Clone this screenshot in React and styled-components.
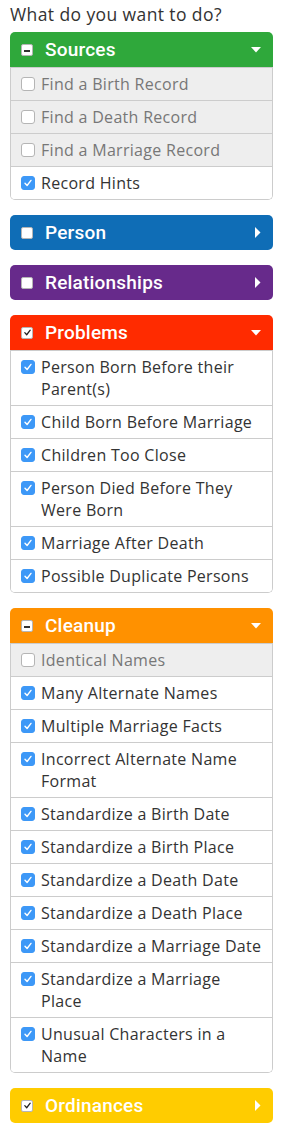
import React from "react";
import styled, { createGlobalStyle } from "styled-components";

const GlobalStyle = createGlobalStyle`
  body {
    margin: 0;
    background: #fff;
    font-family: "Open Sans", "Liberation Sans", sans-serif;
    color: #333;
  }
`;

const Page = styled.div`
  width: 284px;
  box-sizing: border-box;
  padding: 0 11px 20px 10px;
`;

const Title = styled.h1`
  margin: 0;
  padding-top: 3px;
  height: 29px;
  font-size: 17.5px;
  line-height: 22px;
  font-weight: 400;
  letter-spacing: 0.4px;
  color: #333;
`;

const Panel = styled.section`
  margin-bottom: 15px;
`;

const Header = styled.div`
  display: flex;
  align-items: center;
  height: 35px;
  padding: 0 12px 0 11px;
  background: ${({ color }) => color};
  border-radius: ${({ open }) => (open ? "5px 5px 0 0" : "5px")};
  color: #fff;
`;

const HeaderLabel = styled.span`
  flex: 1;
  margin-left: 12px;
  font-family: Roboto, "Liberation Sans", sans-serif;
  font-weight: 500;
  font-size: 19px;
  letter-spacing: 0.2px;
`;

const HeaderBox = styled.span`
  width: 12px;
  height: 12px;
  box-sizing: border-box;
  background: #fff;
  border: 1px solid #b5b5b5;
  border-radius: 2px;
  display: flex;
  align-items: center;
  justify-content: center;
`;

const Body = styled.div`
  border: 1px solid #ccc;
  border-top: none;
  border-radius: 0 0 5px 5px;
  overflow: hidden;
`;

const Row = styled.label`
  display: flex;
  align-items: flex-start;
  gap: 6px;
  padding: 5px 8px 5px 10px;
  line-height: 22px;
  font-size: 16px;
  letter-spacing: 0.3px;
  border-top: 1px solid #ccc;
  background: ${({ checked }) => (checked ? "#fff" : "#eee")};
  color: ${({ checked }) => (checked ? "#333" : "#777")};
`;

const Box = styled.span`
  flex: none;
  margin-top: 4px;
  width: 14px;
  height: 14px;
  box-sizing: border-box;
  border-radius: 3px;
  background: ${({ checked }) => (checked ? "#3d98f7" : "#fff")};
  border: 1px solid ${({ checked }) => (checked ? "#3d98f7" : "#b5b5b5")};
  display: flex;
  align-items: center;
  justify-content: center;
`;

const Check = ({ color = "#fff", size = 10 }) => (
  <svg width={size} height={size} viewBox="0 0 10 10">
    <path d="M2 5.2 L4.1 7.5 L8 2.4" fill="none" stroke={color} strokeWidth="1.4" strokeLinecap="round" strokeLinejoin="round" />
  </svg>
);

const Minus = () => (
  <svg width="8" height="8" viewBox="0 0 8 8">
    <rect x="1" y="4" width="6" height="2" fill="#333" />
  </svg>
);

const Caret = ({ open }) =>
  open ? (
    <svg width="10" height="6" viewBox="0 0 10 6">
      <path d="M0 0 H10 L5 5.5 Z" fill="#fff" />
    </svg>
  ) : (
    <svg width="6" height="11" viewBox="0 0 6 11">
      <path d="M0 0 V11 L5.5 5.5 Z" fill="#fff" />
    </svg>
  );

const sections = [
  {
    name: "Sources",
    color: "#2fa83b",
    state: "some",
    items: [
      ["Find a Birth Record", false],
      ["Find a Death Record", false],
      ["Find a Marriage Record", false],
      ["Record Hints", true],
    ],
  },
  { name: "Person", color: "#0f6db6", state: "none" },
  { name: "Relationships", color: "#672a8b", state: "none" },
  {
    name: "Problems",
    color: "#ff2b00",
    state: "all",
    items: [
      ["Person Born Before their Parent(s)", true],
      ["Child Born Before Marriage", true],
      ["Children Too Close", true],
      ["Person Died Before They Were Born", true],
      ["Marriage After Death", true],
      ["Possible Duplicate Persons", true],
    ],
  },
  {
    name: "Cleanup",
    color: "#ff9100",
    state: "some",
    items: [
      ["Identical Names", false],
      ["Many Alternate Names", true],
      ["Multiple Marriage Facts", true],
      ["Incorrect Alternate Name Format", true],
      ["Standardize a Birth Date", true],
      ["Standardize a Birth Place", true],
      ["Standardize a Death Date", true],
      ["Standardize a Death Place", true],
      ["Standardize a Marriage Date", true],
      ["Standardize a Marriage Place", true],
      ["Unusual Characters in a Name", true],
    ],
  },
  { name: "Ordinances", color: "#ffcc00", state: "all" },
];

function Section({ name, color, state, items }) {
  const open = !!items;
  return (
    <Panel>
      <Header color={color} open={open}>
        <HeaderBox>
          {state === "some" && <Minus />}
          {state === "all" && <Check color="#222" size={9} />}
        </HeaderBox>
        <HeaderLabel>{name}</HeaderLabel>
        <Caret open={open} />
      </Header>
      {open && (
        <Body>
          {items.map(([label, checked]) => (
            <Row key={label} checked={checked}>
              <Box checked={checked}>{checked && <Check />}</Box>
              <span>{label}</span>
            </Row>
          ))}
        </Body>
      )}
    </Panel>
  );
}

export default function App() {
  return (
    <Page>
      <GlobalStyle />
      <Title>What do you want to do?</Title>
      {sections.map((s) => (
        <Section key={s.name} {...s} />
      ))}
    </Page>
  );
}
